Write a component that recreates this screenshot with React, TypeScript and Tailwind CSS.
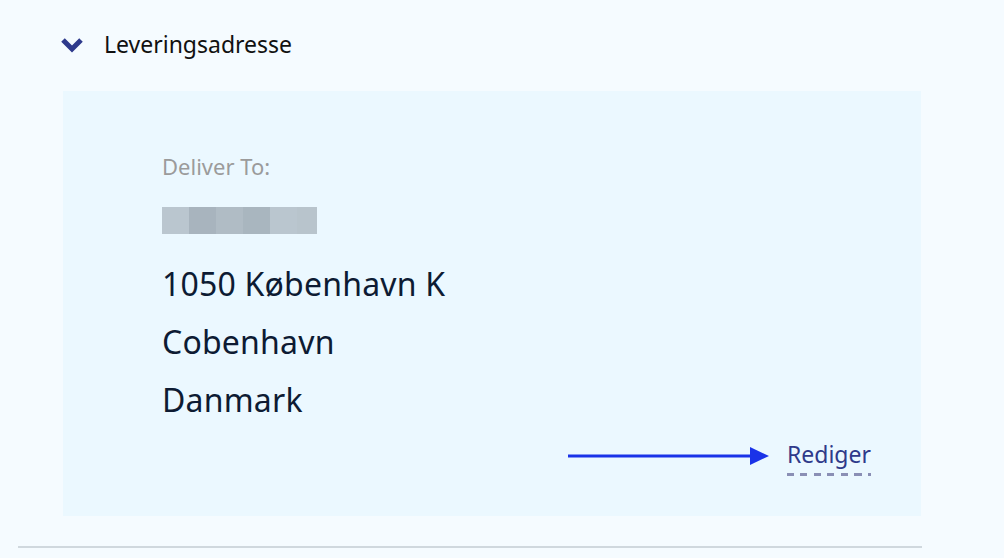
import React from "react";

const blurBlocks = [
    { w: "w-[27px]", c: "bg-[#bac6cf]" },
    { w: "w-[27px]", c: "bg-[#a8b4be]" },
    { w: "w-[27px]", c: "bg-[#b0bcc5]" },
    { w: "w-[27px]", c: "bg-[#a9b6bf]" },
    { w: "w-[27px]", c: "bg-[#bac6cf]" },
    { w: "w-[20px]", c: "bg-[#b8c4cc]" },
];

export default function App() {
    return (
        <div className="min-h-[558px] w-full bg-[#f5fbff] font-['Noto_Sans',sans-serif] text-[#0d1b33]">
            <div className="w-[904px] ml-[18px]">
                <div className="flex items-center h-[91px] pb-[2px] pl-[42px]">
                    <svg width="24" height="16" viewBox="0 0 24 16" className="mt-[1px]">
                        <path d="M3 3 L12 12 L21 3" fill="none" stroke="#2e3a8c" strokeWidth="5" strokeLinejoin="miter" />
                    </svg>
                    <span className="ml-[20px] text-[23px] text-[#111] leading-none">Leveringsadresse</span>
                </div>

                <div className="ml-[45px] w-[858px] h-[425px] bg-[#ebf8ff] pt-[60px] pl-[99px] pr-[50px] flex flex-col">
                    <p className="text-[22px] leading-[30px] text-[#9b9b9b]">Deliver To:</p>
                    <div className="flex mt-[26px] h-[27px] shrink-0">
                        {blurBlocks.map((b, i) => (
                            <div key={i} className={`${b.w} h-full ${b.c}`} />
                        ))}
                    </div>
                    <div className="mt-[30px] flex flex-col gap-[18px] text-[32px] leading-[40px] tracking-[0.2px]">
                        <p>1050 København K</p>
                        <p>Cobenhavn</p>
                        <p>Danmark</p>
                    </div>
                    <div className="flex items-center justify-end mt-[19px]">
                        <svg width="202" height="20" viewBox="0 0 202 20" className="mr-[17px] mb-[3px]">
                            <line x1="0" y1="10" x2="184" y2="10" stroke="#1a33e8" strokeWidth="3" />
                            <path d="M182 1 L201 10 L182 19 Z" fill="#1a33e8" />
                        </svg>
                        <div className="flex flex-col">
                            <span className="text-[23px] leading-[30px] text-[#2f3a8a]">Rediger</span>
                            <div className="mt-[4px] h-[3px] bg-[repeating-linear-gradient(to_right,#8a8fb5_0_7px,transparent_7px_13.5px)]" />
                        </div>
                    </div>
                </div>

                <div className="mt-[30px] h-[2px] bg-[#d0d8de]" />
            </div>
        </div>
    );
}
